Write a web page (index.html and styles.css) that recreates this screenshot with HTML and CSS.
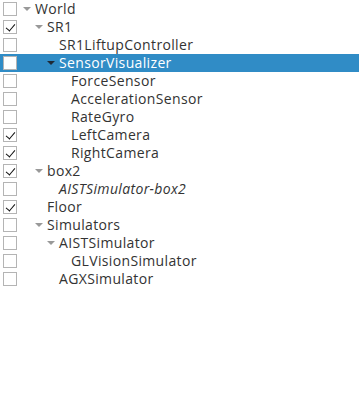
FILE: index.html
```html
<!DOCTYPE html>
<html lang="en">
<head>
    <meta charset="UTF-8">
    <title>Items</title>
    <link rel="stylesheet" href="styles.css">
</head>
<body>
    <ul class="tree">
        <li class="row l0"><span class="check"></span><span class="arrow"></span><span class="name">World</span></li>
        <li class="row l1"><span class="check on"></span><span class="arrow"></span><span class="name">SR1</span></li>
        <li class="row l2"><span class="check"></span><span class="name">SR1LiftupController</span></li>
        <li class="row l2 selected"><span class="check"></span><span class="arrow"></span><span class="name">SensorVisualizer</span></li>
        <li class="row l3"><span class="check"></span><span class="name">ForceSensor</span></li>
        <li class="row l3"><span class="check"></span><span class="name">AccelerationSensor</span></li>
        <li class="row l3"><span class="check"></span><span class="name">RateGyro</span></li>
        <li class="row l3"><span class="check on"></span><span class="name">LeftCamera</span></li>
        <li class="row l3"><span class="check on"></span><span class="name">RightCamera</span></li>
        <li class="row l1"><span class="check on"></span><span class="arrow"></span><span class="name">box2</span></li>
        <li class="row l2"><span class="check"></span><span class="name sub">AISTSimulator-box2</span></li>
        <li class="row l1"><span class="check on"></span><span class="name">Floor</span></li>
        <li class="row l1"><span class="check"></span><span class="arrow"></span><span class="name">Simulators</span></li>
        <li class="row l2"><span class="check"></span><span class="arrow"></span><span class="name">AISTSimulator</span></li>
        <li class="row l3"><span class="check"></span><span class="name">GLVisionSimulator</span></li>
        <li class="row l2"><span class="check"></span><span class="name">AGXSimulator</span></li>
    </ul>
</body>
</html>
```

FILE: styles.css
```css
* {
    margin: 0;
    padding: 0;
    box-sizing: border-box;
}

body {
    background: #fff;
    font-family: "Open Sans", "DejaVu Sans", sans-serif;
    font-size: 14px;
    letter-spacing: 0.35px;
    color: #333;
}

.tree {
    list-style: none;
}

.row {
    display: flex;
    align-items: center;
    height: 18px;
    position: relative;
}

.row.selected {
    background: #308cc6;
    color: #fff;
}

.check {
    position: absolute;
    left: 3px;
    top: 2px;
    width: 14px;
    height: 14px;
    border: 1px solid #b4b4b4;
    background: #fff;
}

.check.on::after {
    content: "";
    position: absolute;
    left: 4px;
    top: 1px;
    width: 4px;
    height: 8px;
    border: solid #111;
    border-width: 0 1.6px 1.6px 0;
    transform: rotate(40deg);
}

/* expand triangle sits left of the label */
.arrow {
    width: 8px;
    height: 18px;
    margin-left: -12px;
    margin-right: 4px;
    display: flex;
    align-items: center;
    justify-content: center;
}

.arrow::before {
    content: "";
    border-left: 4px solid transparent;
    border-right: 4px solid transparent;
    border-top: 4px solid #999;
}

.selected .arrow::before {
    border-top-color: #1e2a36;
}

.l0 { padding-left: 35px; }
.l1 { padding-left: 47px; }
.l2 { padding-left: 59px; }
.l3 { padding-left: 71px; }

.name {
    white-space: nowrap;
    line-height: 18px;
}

.name.sub {
    font-style: italic;
}
```
